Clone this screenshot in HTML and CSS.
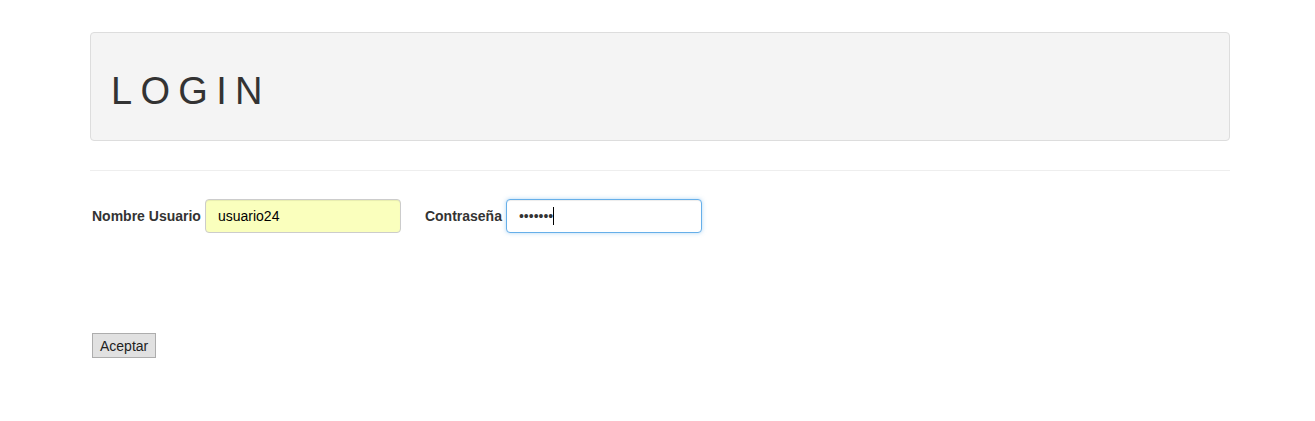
FILE: index.html
```html
<!DOCTYPE html>
<html lang="es">
<head>
<meta charset="utf-8">
<title>Login</title>
<link rel="stylesheet" href="styles.css">
</head>
<body>
<div class="container">
  <div class="jumbotron">
    <h1 class="title">LOGIN</h1>
  </div>
  <hr class="divider">
  <form class="login-form">
    <div class="fields">
      <div class="field">
        <label class="field-label" for="usuario">Nombre Usuario</label>
        <input class="form-control autofilled" id="usuario" type="text" value="usuario24">
      </div>
      <div class="field field-second">
        <label class="field-label" for="clave">Contraseña</label>
        <span class="input-wrap">
          <input class="form-control focused" id="clave" type="password" value="1234567">
          <span class="caret"></span>
        </span>
      </div>
    </div>
    <button class="submit-btn" type="button">Aceptar</button>
  </form>
</div>
</body>
</html>
```
FILE: styles.css
```css
html, body {
  margin: 0;
  padding: 0;
  background: #ffffff;
}
body {
  font-family: "Liberation Sans", Arial, Helvetica, sans-serif;
  font-size: 14px;
  color: #333333;
}
.container {
  width: 1140px;
  margin-left: 90px;
  padding-top: 32px;
}
.jumbotron {
  box-sizing: border-box;
  height: 109px;
  background: #f4f4f4;
  border: 1px solid #dddddd;
  border-radius: 4px;
  padding: 38px 20px 0 20px;
}
.title {
  margin: 0;
  font-family: "Liberation Sans", Arial, Helvetica, sans-serif;
  font-weight: 400;
  font-size: 38px;
  line-height: 1.1;
  letter-spacing: 8.3px;
  color: #333333;
}
.divider {
  margin: 29px 0 0 0;
  border: 0;
  border-top: 1px solid #eeeeee;
  height: 0;
}
.login-form {
  padding-top: 28px;
}
.fields {
  display: flex;
  align-items: center;
  padding-left: 2px;
}
.field {
  display: flex;
  align-items: center;
}
.field-second {
  margin-left: 24px;
}
.field-label {
  font-weight: 700;
  font-size: 14px;
  color: #333333;
  margin-right: 4px;
}
.form-control {
  box-sizing: border-box;
  width: 196px;
  height: 34px;
  padding: 6px 12px;
  font-family: "Liberation Sans", Arial, Helvetica, sans-serif;
  font-size: 14px;
  color: #555555;
  background: #ffffff;
  border: 1px solid #cccccc;
  border-radius: 4px;
  box-shadow: inset 0 1px 1px rgba(0, 0, 0, 0.075);
  outline: none;
  display: block;
}
.autofilled {
  background: #faffbd;
  color: #000000;
}
.focused {
  border-color: #66afe9;
  box-shadow: inset 0 1px 1px rgba(0, 0, 0, 0.075), 0 0 4px rgba(102, 175, 233, 0.5);
  color: #333333;
}
.input-wrap {
  position: relative;
  display: block;
}
.caret {
  position: absolute;
  left: 47px;
  top: 8px;
  width: 1px;
  height: 18px;
  background: #000000;
}
.submit-btn {
  margin-top: 100px;
  margin-left: 2px;
  height: 25px;
  padding: 1px 7px;
  font-family: "Liberation Sans", Arial, Helvetica, sans-serif;
  font-size: 14px;
  color: #222222;
  background: #e1e1e1;
  border: 1px solid #adadad;
  border-radius: 0;
  display: block;
}
```
